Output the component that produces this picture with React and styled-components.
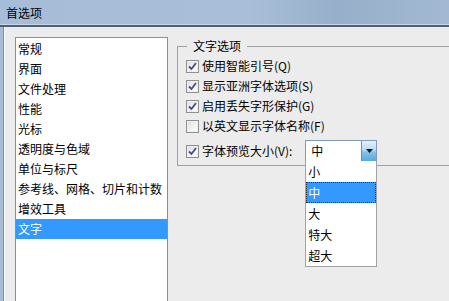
import React from 'react';
import styled, { createGlobalStyle } from 'styled-components';

const GlobalStyle = createGlobalStyle`
    html, body {
        margin: 0;
        padding: 0;
        background: #ececec;
    }
    body {
        font-family: "Noto Sans CJK SC", "Liberation Sans", sans-serif;
        font-size: 12px;
        color: #000;
    }
`;

const Window = styled.div`
    width: 449px;
    height: 301px;
    overflow: hidden;
    display: flex;
    flex-direction: column;
    background: #a9bdd6;
`;

const TitleBar = styled.div`
    height: 25px;
    flex: none;
    display: flex;
    align-items: center;
    padding-left: 6px;
    background: linear-gradient(90deg, #a7bdd7 0%, #a9bfd9 55%, #97afca 75%, #a3b9d3 100%);
    border-bottom: 2px solid #4f6076;
    box-shadow: inset 0 -1px 0 #c9d6e4;
    font-size: 12px;
    line-height: 14px;
`;

const Frame = styled.div`
    flex: 1;
    display: flex;
    border-left: 3px solid #a9bdd6;
`;

const Body = styled.div`
    flex: 1;
    display: flex;
    align-items: flex-start;
    gap: 9px;
    padding: 10px 0 0 11px;
    background: #ececec;
    border-left: 1px solid #7d8ea3;
    box-shadow: inset 1px 0 0 #fbfbfb;
`;

const ListBox = styled.ul`
    list-style: none;
    margin: 0;
    padding: 1px 0 0;
    width: 153px;
    height: 300px;
    box-sizing: border-box;
    background: #fff;
    border: 1px solid #8a8f96;
    flex: none;
`;

const ListItem = styled.li`
    height: 20px;
    line-height: 20px;
    padding-left: 2px;
    white-space: nowrap;
    background: ${(p) => (p.$selected ? '#3399ff' : 'transparent')};
    color: ${(p) => (p.$selected ? '#fff' : '#000')};
`;

const Group = styled.fieldset`
    margin: 2px 0 0;
    padding: 3px 0 3px 8px;
    width: 300px;
    flex: none;
    border: 1px solid #a0a0a0;
    border-right: none;
    min-inline-size: 0;
`;

const GroupTitle = styled.legend`
    margin-left: 1px;
    padding: 0 6px;
    font-size: 12px;
    line-height: 14px;
`;

const Row = styled.div`
    display: flex;
    align-items: center;
    height: ${(p) => (p.$tall ? '22px' : '20px')};
    margin-top: ${(p) => (p.$tall ? '4px' : '0')};
    gap: 3px;
    white-space: nowrap;
`;

const Box = styled.span`
    width: 13px;
    height: 13px;
    box-sizing: border-box;
    border: 1px solid #8e8f8f;
    background: linear-gradient(135deg, #dcdcdc 0%, #f4f4f4 60%, #fdfdfd 100%);
    box-shadow: inset 0 0 0 1px #f0f0f0;
    display: flex;
    align-items: center;
    justify-content: center;
    flex: none;
`;

const Label = styled.span`
    line-height: 14px;
`;

const Combo = styled.div`
    position: relative;
    margin-left: 10px;
    width: 72px;
    height: 22px;
    box-sizing: border-box;
    border: 1px solid #7f9bb8;
    background: #fff;
    display: flex;
    align-items: center;
`;

const ComboValue = styled.span`
    flex: 1;
    padding-left: 5px;
    line-height: 14px;
`;

const ComboButton = styled.span`
    width: 15px;
    align-self: stretch;
    box-sizing: border-box;
    border-left: 1px solid #6f90b3;
    background: linear-gradient(180deg, #e3f1fb 0%, #b7dbf3 45%, #86c2ea 55%, #5aa9dc 100%);
    display: flex;
    align-items: center;
    justify-content: center;
`;

const Dropdown = styled.ul`
    position: absolute;
    top: 100%;
    left: -1px;
    width: 72px;
    box-sizing: border-box;
    margin: 0;
    padding: 0;
    list-style: none;
    background: #fff;
    border: 1px solid #a3a3a3;
    border-top: none;
    z-index: 2;
`;

const Option = styled.li`
    height: 21px;
    line-height: 21px;
    padding-left: 2px;
    box-sizing: border-box;
    background: ${(p) => (p.$active ? '#3399ff' : 'transparent')};
    color: ${(p) => (p.$active ? '#fff' : '#000')};
    outline: ${(p) => (p.$active ? '1px dotted #333' : 'none')};
    outline-offset: -1px;
`;

const categories = [
    '常规',
    '界面',
    '文件处理',
    '性能',
    '光标',
    '透明度与色域',
    '单位与标尺',
    '参考线、网格、切片和计数',
    '增效工具',
    '文字',
];

const options = [
    { label: '使用智能引号(Q)', checked: true },
    { label: '显示亚洲字体选项(S)', checked: true },
    { label: '启用丢失字形保护(G)', checked: true },
    { label: '以英文显示字体名称(F)', checked: false },
];

const sizes = ['小', '中', '大', '特大', '超大'];

function CheckBox({ checked }) {
    return (
        <Box>
            {checked && (
                <svg width="9" height="9" viewBox="0 0 9 9">
                    <path d="M1 4.5 L3.5 7 L8 1" fill="none" stroke="#3f4f86" strokeWidth="1.8" />
                </svg>
            )}
        </Box>
    );
}

function App() {
    return (
        <>
            <GlobalStyle />
            <Window>
                <TitleBar>首选项</TitleBar>
                <Frame>
                    <Body>
                        <ListBox>
                            {categories.map((c) => (
                                <ListItem key={c} $selected={c === '文字'}>
                                    {c}
                                </ListItem>
                            ))}
                        </ListBox>
                        <Group>
                            <GroupTitle>文字选项</GroupTitle>
                            {options.map((o) => (
                                <Row key={o.label}>
                                    <CheckBox checked={o.checked} />
                                    <Label>{o.label}</Label>
                                </Row>
                            ))}
                            <Row $tall>
                                <CheckBox checked />
                                <Label>字体预览大小(V):</Label>
                                <Combo>
                                    <ComboValue>中</ComboValue>
                                    <ComboButton>
                                        <svg width="7" height="4" viewBox="0 0 7 4">
                                            <path d="M0 0 H7 L3.5 4 Z" fill="#1a1a1a" />
                                        </svg>
                                    </ComboButton>
                                    <Dropdown>
                                        {sizes.map((s) => (
                                            <Option key={s} $active={s === '中'}>
                                                {s}
                                            </Option>
                                        ))}
                                    </Dropdown>
                                </Combo>
                            </Row>
                        </Group>
                    </Body>
                </Frame>
            </Window>
        </>
    );
}

export default App;
